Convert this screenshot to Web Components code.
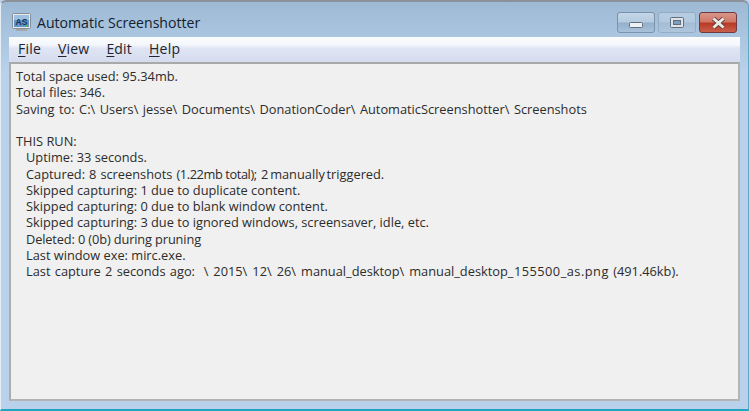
<!DOCTYPE html>
<html>
<head>
<meta charset="utf-8">
<style>
  html, body { margin: 0; padding: 0; width: 749px; height: 411px; overflow: hidden; background: #b9d1ea; }
</style>
</head>
<body>
<aero-window caption="Automatic Screenshotter">
  <menu-bar>
    <menu-item key="F" rest="ile"></menu-item>
    <menu-item key="V" rest="iew"></menu-item>
    <menu-item key="E" rest="dit"></menu-item>
    <menu-item key="H" rest="elp"></menu-item>
  </menu-bar>
  <log-box>
    <log-line>Total space used: 95.34mb.</log-line>
    <log-line>Total files: 346.</log-line>
    <log-line style="word-spacing:1.15px">Saving to: C:\ Users\ jesse\ Documents\ DonationCoder\ AutomaticScreenshotter\ Screenshots</log-line>
    <log-line></log-line>
    <log-line>THIS RUN:</log-line>
    <log-line indent>Uptime: 33 seconds.</log-line>
    <log-line indent><span style="word-spacing:.7px">Captured: 8 screenshots </span><span style="letter-spacing:-.4px">(1.22mb total);</span><span style="word-spacing:1px"> 2</span><span style="word-spacing:-1.6px"> manually triggered.</span></log-line>
    <log-line indent>Skipped capturing: 1 due to duplicate content.</log-line>
    <log-line indent>Skipped capturing: 0 due to blank window content.</log-line>
    <log-line indent>Skipped capturing: 3 due to ignored windows, screensaver, idle, etc.</log-line>
    <log-line indent style="letter-spacing:-.13px">Deleted: 0 (0b) during pruning</log-line>
    <log-line indent>Last window exe: mirc.exe.</log-line>
    <log-line indent><span style="word-spacing:1px">Last capture 2 seconds ago:&nbsp; </span><span style="word-spacing:1.7px">\ 2015\ 12\ 26\ manual_desktop\ manual_desktop</span><span style="letter-spacing:.48px">_155500_as.png</span><span style="word-spacing:1px"> (491.46kb).</span></log-line>
  </log-box>
</aero-window>

<script>
const FONT = '"Open Sans", "Noto Sans", "Liberation Sans", sans-serif';

class AeroWindow extends HTMLElement {
  connectedCallback() {
    this.attachShadow({ mode: "open" });
    this.shadowRoot.innerHTML = `
      <style>
        :host {
          display: flex; flex-direction: column; box-sizing: border-box;
          width: 749px; height: 411px;
          font-family: ${FONT}; color: #1c1c1c;
          background: linear-gradient(#9db9d3 0, #a9c4de 30px, #b9d1ea 70px);
          border-top: 2px solid #8a9198;
          border-left: 1px solid #e6eef6;
          border-right: 1px solid #5fa8c4;
          border-bottom: 2px solid #22a6c0;
          border-radius: 6px 6px 0 0;
        }
        .title { display: flex; align-items: center; box-sizing: border-box; height: 35px; flex: none; padding: 6px 0 0 11px; }
        .caption { margin-left: 6px; font-size: 14.1px; color: #14202c; white-space: nowrap; }
        .btns { margin-left: auto; margin-right: 11px; display: flex; gap: 3px; }
        .btn {
          box-sizing: border-box; width: 38px; height: 21px; border-radius: 3px;
          border: 1px solid #7a93ad; display: flex; align-items: center; justify-content: center;
          background: linear-gradient(#c4d5e7 0, #b6cbe0 48%, #93afcb 52%, #a9c2da 100%);
        }
        .btn.max { border-color: #95acc4; background: linear-gradient(#b8cde2 0, #b2c8de 48%, #a3bcd5 52%, #afc6dd 100%); }
        .btn.close { width: 38px; border-color: #6d3a44; background: linear-gradient(#d9968a 0, #cf7868 45%, #b93a26 55%, #c9604c 100%); }
        .body { flex: 1; display: flex; flex-direction: column; margin: 0 8px 8px 8px; min-height: 0; }
      </style>
      <div class="title">
        <svg width="19" height="19" viewBox="0 0 19 19">
          <rect x="0.5" y="0.5" width="18" height="15" rx="1" fill="#e8e8e8" stroke="#8a8f96"/>
          <rect x="2" y="2" width="15" height="12" fill="#5f94cc"/>
          <rect x="2" y="2" width="15" height="5" fill="#9cc0e2"/>
          <text x="9.5" y="11.500" font-size="8.500" font-weight="700" text-anchor="middle" fill="#16324f" font-family="Liberation Sans">AS</text>
          <rect x="13" y="12" width="2" height="2" fill="#59b84a"/>
          <rect x="4" y="16" width="11" height="2" fill="#a4a8ad"/>
        </svg>
        <span class="caption"></span>
        <div class="btns">
          <div class="btn">
            <svg width="14" height="6" style="margin-top:5px"><rect x="0.5" y="0.5" width="13" height="5" rx="1" fill="#eef0f2" stroke="#5f6f80"/></svg>
          </div>
          <div class="btn max">
            <svg width="14" height="11"><rect x="0.5" y="0.5" width="13" height="10" rx="1" fill="#dfe3e8" stroke="#5f6f80"/><rect x="3.5" y="3.5" width="7" height="4" fill="#7f9dbb" stroke="#5f6f80"/></svg>
          </div>
          <div class="btn close">
            <svg width="15" height="12" viewBox="0 0 15 12"><path d="M2.500 1.500 12.500 10.500M12.500 1.500 2.500 10.500" fill="none" stroke="#5a3a3a" stroke-width="4.500"/><path d="M2.500 1.500 12.500 10.500M12.500 1.500 2.500 10.500" fill="none" stroke="#ece8e4" stroke-width="3"/></svg>
          </div>
        </div>
      </div>
      <div class="body"><slot></slot></div>`;
    this.shadowRoot.querySelector(".caption").textContent = this.getAttribute("caption");
  }
}

class MenuBar extends HTMLElement {
  constructor() {
    super();
    this.attachShadow({ mode: "open" }).innerHTML = `
      <style>
        :host {
          display: flex; flex: none; align-items: center; gap: 17px; box-sizing: border-box;
          height: 25px; padding: 0 9px 2px 9px;
          background: linear-gradient(#fbfcfe 0, #f4f7fb 30%, #dfe5f3 45%, #d5dcee 100%);
        }
      </style>
      <slot></slot>`;
  }
}

class MenuItem extends HTMLElement {
  connectedCallback() {
    this.attachShadow({ mode: "open" });
    this.shadowRoot.innerHTML = `
      <style>
        :host { display: block; font-size: 14px; color: #1e2530; letter-spacing: 0.2px; }
        u { text-underline-offset: 2px; }
      </style>
      <u>${this.getAttribute("key")}</u>${this.getAttribute("rest")}`;
  }
}

class LogBox extends HTMLElement {
  constructor() {
    super();
    this.attachShadow({ mode: "open" }).innerHTML = `
      <style>
        :host {
          display: block; flex: 1; box-sizing: border-box; min-height: 0;
          background: #f0f0f0;
          border-top: 2px solid #a9a9a9; border-left: 2px solid #acacac;
          border-right: 2px solid #b4b4b4; border-bottom: 2px solid #b4b4b4;
          padding: 4px 5px;
          font-size: 12.8px; line-height: 16.25px; color: #2c2c2c;
        }
      </style>
      <slot></slot>`;
  }
}

class LogLine extends HTMLElement {
  constructor() {
    super();
    this.attachShadow({ mode: "open" }).innerHTML = `
      <style>
        :host { display: block; height: 16.25px; white-space: nowrap; }
        :host([indent]) { padding-left: 10px; }
      </style>
      <slot></slot>`;
  }
}

customElements.define("aero-window", AeroWindow);
customElements.define("menu-bar", MenuBar);
customElements.define("menu-item", MenuItem);
customElements.define("log-box", LogBox);
customElements.define("log-line", LogLine);
</script>
</body>
</html>
